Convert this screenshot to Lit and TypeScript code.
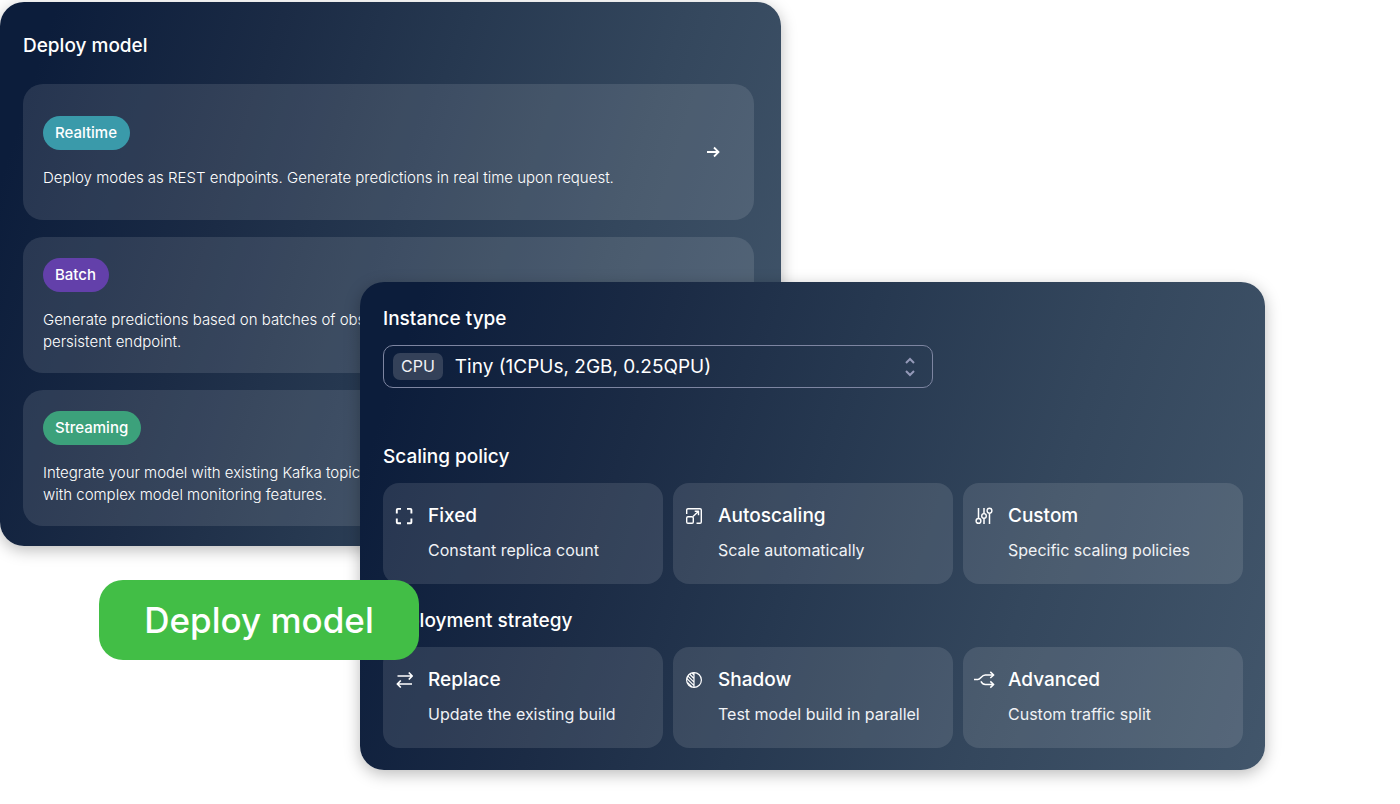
import { LitElement, html, css, svg } from "lit";
import { customElement, property } from "lit/decorators.js";

type Option = { icon: string; title: string; text: string };

const icons: Record<string, unknown> = {
  fixed: svg`<path d="M8 3.900H4.800a1 1 0 0 0-1 1V8.500M14 3.900h3.400a1 1 0 0 1 1 1V8.500M8 18.200H4.800a1 1 0 0 1-1-1V13.500M14 18.200h3.400a1 1 0 0 0 1-1V13.500" stroke-width="1.900"/>`,
  autoscaling: svg`<path d="M3.700 9V5a1.300 1.300 0 0 1 1.300-1.300h12A1.300 1.300 0 0 1 18.300 5v12a1.300 1.300 0 0 1-1.300 1.300h-3.500"/><rect x="3.700" y="11.700" width="6.600" height="6.600" rx="1.300"/><path d="M10 11.500l5.300-5M11.700 6.300h3.800v3.900"/>`,
  custom: svg`<path d="M5.500 3v10.300M11 3v5.500M11 13.200V19M16.500 8.200V19" stroke-width="1.500"/><circle cx="5.500" cy="15.900" r="2.400"/><circle cx="11" cy="10.900" r="2.300"/><circle cx="16.500" cy="5.700" r="2.400"/>`,
  replace: svg`<path d="M4.500 7H19M15.800 3.500L19.200 7l-3.400 3.500M19 15H4.500M7.800 11.500L4.300 15l3.500 3.500" stroke-width="1.700"/>`,
  shadow: svg`<circle cx="11" cy="11" r="7.400" stroke-width="1.200"/><path d="M11 3.600v14.800M6.500 5l4.500 4.500M4.700 6.800l6.300 6.300M3.700 9.400l7.300 7.300M4.400 13.300l4.600 4.600M9 4l2 2" stroke-width="1.200"/>`,
  advanced: svg`<path d="M1 10.500h3.800c3 0 3.500-4.500 7.500-4.500h8M17.300 2.900L20.700 6l-3.400 3M7.900 12.300c1.200 2.200 2.400 3.200 4.400 3.200h8M17.300 12.400l3.400 3.100-3.400 3.100" stroke-width="1.500"/>`,
};

@customElement("mode-card")
export class ModeCard extends LitElement {
  @property() name = "";
  @property() tone = "";
  @property({ type: Array }) lines: string[] = [];
  @property({ type: Boolean }) arrow = false;

  static styles = css`
    :host { display: block; }
    .card {
      display: flex; align-items: center; justify-content: space-between;
      box-sizing: border-box; min-height: 136px; padding: 20px 32px 20px 20px;
      border-radius: 20px; background: rgba(255, 255, 255, 0.11);
    }
    .body { display: flex; flex-direction: column; align-items: flex-start; gap: 17px; }
    .tag {
      padding: 0 13px 0 12px; border-radius: 17px;
      font-size: 15px; line-height: 34px; font-weight: 500;
    }
    .teal { background: #3a9aaa; }
    .purple { background: #6340aa; }
    .green { background: #3ca17b; }
    .text {
      margin: 0; font-size: 15px; line-height: 22px; font-weight: 300;
      color: #fff; white-space: nowrap;
    }
    .go {
      display: flex; padding: 0; border: 0; background: none; color: #fff; cursor: pointer;
    }
    .go svg { width: 18px; height: 18px; fill: none; stroke: currentColor; stroke-width: 1.8; }
  `;

  render() {
    return html`<article class="card">
      <div class="body">
        <span class="tag ${this.tone}">${this.name}</span>
        <p class="text">${this.lines.map((l, i) => (i ? html`<br />${l}` : l))}</p>
      </div>
      ${this.arrow
        ? html`<button class="go" type="button" aria-label="Open ${this.name}">
            <svg viewBox="0 0 18 18"><path d="M3 9h11.500M10 4.500L14.500 9 10 13.500" /></svg>
          </button>`
        : null}
    </article>`;
  }
}

@customElement("option-card")
export class OptionCard extends LitElement {
  @property({ type: Object }) option!: Option;

  static styles = css`
    :host { display: block; min-width: 0; }
    .card {
      display: grid; grid-template-columns: 22px 1fr; column-gap: 13px; row-gap: 11px;
      align-items: center; width: 100%; padding: 21px 10px 23px;
      border: 0; border-radius: 16px; background: rgba(255, 255, 255, 0.11);
      color: #fff; font: inherit; text-align: left; cursor: pointer;
    }
    .icon {
      width: 22px; height: 22px; fill: none; stroke: #fff;
      stroke-width: 1.4; stroke-linejoin: round;
    }
    .title { font-size: 19px; line-height: 24px; font-weight: 500; }
    .text { grid-column: 2; font-size: 16px; line-height: 22px; color: #f0f2f5; white-space: nowrap; }
  `;

  render() {
    const { icon, title, text } = this.option;
    return html`<button class="card" type="button">
      <svg class="icon" viewBox="0 0 22 22" aria-hidden="true">${icons[icon]}</svg>
      <span class="title">${title}</span>
      <span class="text">${text}</span>
    </button>`;
  }
}

@customElement("app-root")
export class AppRoot extends LitElement {
  static styles = css`
    :host {
      display: block; min-height: 100vh; background: #fff; color: #fff;
      font-family: Inter, "Liberation Sans", sans-serif;
    }
    .stage {
      position: relative; display: grid;
      grid-template-columns: 360fr 421fr 484fr 135fr;
      align-items: start; padding-top: 2px; overflow: hidden;
      min-height: 100vh; box-sizing: border-box;
    }
    .panel {
      grid-row: 1; box-sizing: border-box; border-radius: 24px;
      background: linear-gradient(108deg, #0c1d3b 6%, #1b2b45 30%, #263850 49%, #34475d 72%, #42566b 100%);
      box-shadow: 0 4px 16px rgba(0, 0, 0, 0.27);
    }
    .modes { grid-column: 1 / 3; padding: 31px 27px 20px 23px; }
    .settings { grid-column: 2 / 4; margin-top: 280px; padding: 24px 22px 22px 23px; z-index: 1; }
    .heading { display: block; margin: 0; font-size: 19px; line-height: 26px; font-weight: 500; }
    .list { display: grid; gap: 17px; margin-top: 25px; }
    .select {
      position: relative; display: flex; align-items: center; box-sizing: border-box;
      width: 64%; height: 43px; margin: 13px 0 56px; padding-left: 9px;
      border: 1px solid #7d85a1; border-radius: 10px;
    }
    .kind {
      padding: 0 8px; border-radius: 7px; background: #344159; color: #f0f2f5;
      font-size: 16px; line-height: 27px;
    }
    .field {
      flex: 1; min-width: 0; height: 41px; padding: 0 40px 0 12px; border: 0;
      appearance: none; background: none; color: #fff;
      font-family: inherit; font-size: 19px; cursor: pointer;
    }
    .chevrons {
      position: absolute; right: 12px; width: 20px; height: 22px; pointer-events: none;
      fill: none; stroke: #9499b8; stroke-width: 2;
    }
    .options { display: grid; grid-template-columns: repeat(3, 1fr); gap: 10px; margin-top: 13px; }
    .options + .heading { margin-top: 24px; }
    .deploy {
      position: absolute; top: 580px; left: 99px; z-index: 2;
      width: 320px; height: 80px; border: 0; border-radius: 24px;
      background: #42be46; color: #fff;
      font-family: inherit; font-size: 35px; font-weight: 500; cursor: pointer;
    }
  `;

  private scaling: Option[] = [
    { icon: "fixed", title: "Fixed", text: "Constant replica count" },
    { icon: "autoscaling", title: "Autoscaling", text: "Scale automatically" },
    { icon: "custom", title: "Custom", text: "Specific scaling policies" },
  ];

  private strategy: Option[] = [
    { icon: "replace", title: "Replace", text: "Update the existing build" },
    { icon: "shadow", title: "Shadow", text: "Test model build in parallel" },
    { icon: "advanced", title: "Advanced", text: "Custom traffic split" },
  ];

  private cards(list: Option[]) {
    return html`<div class="options">
      ${list.map((o) => html`<option-card .option=${o}></option-card>`)}
    </div>`;
  }

  render() {
    return html`<main class="stage">
      <section class="panel modes">
        <h2 class="heading">Deploy model</h2>
        <div class="list">
          <mode-card name="Realtime" tone="teal" arrow
            .lines=${["Deploy modes as REST endpoints. Generate predictions in real time upon request."]}></mode-card>
          <mode-card name="Batch" tone="purple"
            .lines=${["Generate predictions based on batches of observations", "persistent endpoint."]}></mode-card>
          <mode-card name="Streaming" tone="green"
            .lines=${["Integrate your model with existing Kafka topics", "with complex model monitoring features."]}></mode-card>
        </div>
      </section>
      <section class="panel settings">
        <label class="heading" for="instance">Instance type</label>
        <div class="select">
          <span class="kind">CPU</span>
          <select class="field" id="instance">
            <option>Tiny (1CPUs, 2GB, 0.25QPU)</option>
          </select>
          <svg class="chevrons" viewBox="0 0 20 22" aria-hidden="true">
            <path d="M6 7l4-4 4 4M6 15l4 4 4-4" />
          </svg>
        </div>
        <h2 class="heading">Scaling policy</h2>
        ${this.cards(this.scaling)}
        <h2 class="heading">Deployment strategy</h2>
        ${this.cards(this.strategy)}
      </section>
      <button class="deploy" type="button">Deploy model</button>
    </main>`;
  }
}
